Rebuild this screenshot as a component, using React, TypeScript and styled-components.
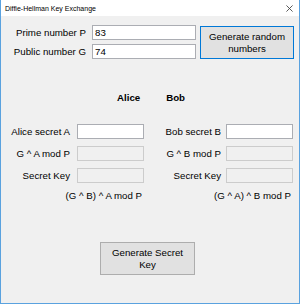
import React from 'react';
import styled, { createGlobalStyle } from 'styled-components';

const GlobalStyle = createGlobalStyle`
   html, body {
      margin: 0;
      padding: 0;
      background: #ffffff;
   }
   * {
      box-sizing: border-box;
   }
`;

interface PanelProps {
   labelWidth: number;
   gap: number;
   inputWidth: number;
   secretLabel: string;
   publicLabel: string;
   formula: string;
}

const Panel = ({
   labelWidth,
   gap,
   inputWidth,
   secretLabel,
   publicLabel,
   formula,
}: PanelProps) => {
   return (
      <PanelGrid $labelWidth={labelWidth} $gap={gap} $inputWidth={inputWidth}>
         <Label>{secretLabel}</Label>
         <Input defaultValue="" />
         <Label>{publicLabel}</Label>
         <Input disabled />
         <Label>Secret Key</Label>
         <Input disabled />
         <Formula>{formula}</Formula>
      </PanelGrid>
   );
};

const App = () => {
   return (
      <>
         <GlobalStyle />
         <Window>
            <TitleBar>
               <Title>Diffie-Hellman Key Exchange</Title>
               <CloseIcon viewBox="0 0 8 8">
                  <path d="M0.5 0.5 L7.5 7.5 M7.5 0.5 L0.5 7.5" />
               </CloseIcon>
            </TitleBar>
            <Body>
               <TopSection>
                  <Label>Prime number P</Label>
                  <Input defaultValue="83" />
                  <Button $focused $span>
                     Generate random
                     <br />
                     numbers
                  </Button>
                  <Label>Public number G</Label>
                  <Input defaultValue="74" />
               </TopSection>
               <Headers>
                  <Header $left={116}>Alice</Header>
                  <Header $left={26}>Bob</Header>
               </Headers>
               <Panels>
                  <Panel
                     labelWidth={69}
                     gap={7}
                     inputWidth={67}
                     secretLabel="Alice secret A"
                     publicLabel="G ^ A mod P"
                     formula="(G ^ B) ^ A mod P"
                  />
                  <Panel
                     labelWidth={71}
                     gap={5}
                     inputWidth={67}
                     secretLabel="Bob secret B"
                     publicLabel="G ^ B mod P"
                     formula="(G ^ A) ^ B mod P"
                  />
               </Panels>
               <Footer>
                  <Button>
                     Generate Secret
                     <br />
                     Key
                  </Button>
               </Footer>
            </Body>
         </Window>
      </>
   );
};

const Window = styled.div`
   width: 300px;
   height: 304px;
   display: flex;
   flex-direction: column;
   border: 1px solid #5aa2df;
   border-top: none;
   background: #f0f0f0;
   font-family: 'Liberation Sans', Arial, sans-serif;
   font-size: 9.7px;
   color: #000000;
`;

const TitleBar = styled.div`
   height: 16px;
   background: #ffffff;
   display: flex;
   align-items: center;
   justify-content: space-between;
   padding: 0 6px 0 4px;
`;

const Title = styled.span`
   font-size: 7px;
   color: #000000;
`;

const CloseIcon = styled.svg`
   width: 7px;
   height: 7px;
   fill: none;
   stroke: #444444;
   stroke-width: 1;
`;

const Body = styled.div`
   flex: 1;
   display: flex;
   flex-direction: column;
`;

const TopSection = styled.div`
   display: grid;
   grid-template-columns: 84px 104px 94px;
   grid-template-rows: 15px 15px;
   column-gap: 5px;
   row-gap: 4px;
   margin-top: 9px;
   padding-left: 1px;
   align-items: center;

   & > :nth-child(2),
   & > :nth-child(5) {
      margin-left: 1px;
   }
`;

const Label = styled.div`
   text-align: right;
   white-space: nowrap;
   line-height: 15px;
`;

const Input = styled.input`
   width: 100%;
   height: 15px;
   border: 1px solid #abadb3;
   background: #ffffff;
   font-family: inherit;
   font-size: 9.7px;
   padding: 0 2px;
   outline: none;

   &:disabled {
      background: #f0f0f0;
      border-color: #cccccc;
   }
`;

const Button = styled.button<{ $focused?: boolean; $span?: boolean }>`
   width: ${({ $span }) => ($span ? '94px' : '95px')};
   height: 33px;
   grid-row: ${({ $span }) => ($span ? '1 / span 2' : 'auto')};
   grid-column: ${({ $span }) => ($span ? '3' : 'auto')};
   align-self: ${({ $span }) => ($span ? 'end' : 'auto')};
   background: #e1e1e1;
   border: 1px solid ${({ $focused }) => ($focused ? '#0078d7' : '#adadad')};
   font-family: inherit;
   font-size: 9.7px;
   line-height: 12px;
   color: #000000;
   padding: 0;
`;

const Headers = styled.div`
   display: flex;
   margin-top: 32px;
   font-weight: bold;
   line-height: 13px;
`;

const Header = styled.span<{ $left: number }>`
   margin-left: ${({ $left }) => $left}px;
`;

const Panels = styled.div`
   display: flex;
   margin-top: 20px;
`;

const PanelGrid = styled.div<{
   $labelWidth: number;
   $gap: number;
   $inputWidth: number;
}>`
   width: 149px;
   display: grid;
   grid-template-columns: ${({ $labelWidth, $inputWidth }) =>
      `${$labelWidth}px ${$inputWidth}px`};
   grid-auto-rows: 15px;
   column-gap: ${({ $gap }) => $gap}px;
   row-gap: 7px;
   align-items: center;
`;

const Formula = styled.div`
   grid-column: 1 / span 2;
   text-align: right;
   padding-right: 2px;
   white-space: nowrap;
   margin-top: -4px;
`;

const Footer = styled.div`
   display: flex;
   margin-top: 37px;
   padding-left: 99px;
`;

export default App;
